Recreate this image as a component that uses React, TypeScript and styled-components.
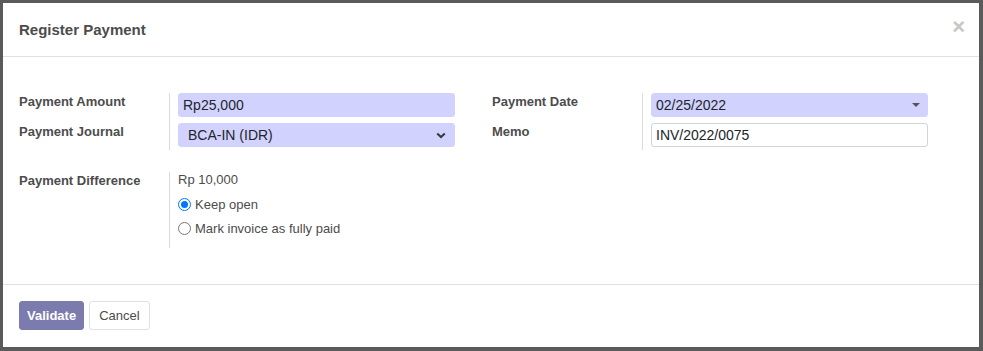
import React, { FC } from 'react'
import styled, { createGlobalStyle } from 'styled-components'

const Global = createGlobalStyle`
  html, body {
    margin: 0;
    padding: 0;
    background: #5a5a5a;
    font-family: "Liberation Sans", Arial, sans-serif;
    font-size: 13px;
    color: #4c4c4c;
  }
  * { box-sizing: border-box; }
`

const Backdrop = styled.div`
  width: 983px;
  height: 351px;
  padding: 3px 4px 4px 3px;
  background: #5a5a5a;
`

const Modal = styled.div`
  background: #fff;
  height: 100%;
  display: flex;
  flex-direction: column;
`

const Header = styled.div`
  height: 54px;
  border-bottom: 1px solid #dee2e6;
  display: flex;
  align-items: center;
  justify-content: space-between;
  padding: 0 14px 0 16px;

  & > h4 {
    margin: 0;
    font-size: 15px;
    font-weight: 700;
    color: #4c4c4c;
  }
`

const Close = styled.span`
  color: #c6c6c6;
  font-size: 22px;
  font-weight: 700;
  line-height: 1;
  margin-top: -5px;
`

const Body = styled.div`
  flex: 1;
  padding: 36px 16px 0 16px;
  display: flex;
  flex-direction: column;
  gap: 22px;
`

const Groups = styled.div`
  display: flex;
  gap: 37px;
`

const Group = styled.div`
  width: 436px;
  display: grid;
  grid-template-columns: 150px 1fr;
`

const Labels = styled.div`
  display: flex;
  flex-direction: column;
  gap: 6px;
`

const Label = styled.div<{ $h?: number }>`
  height: ${p => p.$h ?? 24}px;
  font-weight: 700;
  color: #4c4c4c;
  padding-top: 1px;
`

const Fields = styled.div<{ $pad?: number }>`
  border-left: 1px solid #dcdcdc;
  padding: 0 0 ${p => p.$pad ?? 3}px 8px;
  display: flex;
  flex-direction: column;
  gap: 6px;
`

const Input = styled.div<{ $required?: boolean }>`
  height: 24px;
  border-radius: 3px;
  border: 1px solid ${p => (p.$required ? '#d2d2ff' : '#ced4da')};
  background: ${p => (p.$required ? '#d2d2ff' : '#fff')};
  display: flex;
  align-items: center;
  justify-content: space-between;
  padding: 0 8px 0 4px;
  font-size: 14px;
  color: #212529;
`

const SelectText = styled.span`
  padding-left: 5px;
`

const Caret = styled.span`
  width: 0;
  height: 0;
  border-left: 4px solid transparent;
  border-right: 4px solid transparent;
  border-top: 4px solid #555;
  margin-right: -1px;
`

const Plain = styled.div`
  height: 17px;
  font-size: 13px;
  color: #4c4c4c;
`

const Radio = styled.label`
  height: 18px;
  display: flex;
  align-items: center;
  gap: 4px;
  font-size: 13px;
  color: #4c4c4c;
`

const Dot = styled.span<{ $on?: boolean }>`
  width: 13px;
  height: 13px;
  border-radius: 50%;
  border: 1px solid ${p => (p.$on ? '#0075ff' : '#767676')};
  background: #fff;
  display: flex;
  align-items: center;
  justify-content: center;

  &::after {
    content: '';
    width: 7px;
    height: 7px;
    border-radius: 50%;
    background: ${p => (p.$on ? '#0075ff' : 'transparent')};
  }
`

const Footer = styled.div`
  height: 63px;
  border-top: 1px solid #dee2e6;
  display: flex;
  align-items: flex-start;
  gap: 5px;
  padding: 16px 16px 0 16px;
`

const Button = styled.button<{ $primary?: boolean }>`
  height: 29px;
  padding: 0 ${p => (p.$primary ? 7 : 9)}px;
  border-radius: 3px;
  font-family: "Liberation Sans", Arial, sans-serif;
  font-size: 13px;
  font-weight: ${p => (p.$primary ? 700 : 400)};
  color: ${p => (p.$primary ? '#fff' : '#4c4c4c')};
  background: ${p => (p.$primary ? '#7c7bad' : '#fff')};
  border: 1px solid ${p => (p.$primary ? '#7c7bad' : '#dee2e6')};
`

const Chevron: FC = () => (
  <svg width="10" height="7" viewBox="0 0 10 7">
    <path d="M1.2 1.4 L5 5 L8.8 1.4" fill="none" stroke="#343a40" strokeWidth="2" />
  </svg>
)

const App: FC = () => {
  return (
    <Backdrop>
      <Global />
      <Modal>
        <Header>
          <h4>Register Payment</h4>
          <Close>×</Close>
        </Header>
        <Body>
          <Groups>
            <Group>
              <Labels>
                <Label>Payment Amount</Label>
                <Label>Payment Journal</Label>
              </Labels>
              <Fields>
                <Input $required>Rp25,000</Input>
                <Input $required>
                  <SelectText>BCA-IN (IDR)</SelectText>
                  <Chevron />
                </Input>
              </Fields>
            </Group>
            <Group>
              <Labels>
                <Label>Payment Date</Label>
                <Label>Memo</Label>
              </Labels>
              <Fields>
                <Input $required>
                  <span>02/25/2022</span>
                  <Caret />
                </Input>
                <Input>INV/2022/0075</Input>
              </Fields>
            </Group>
          </Groups>
          <Groups>
            <Group>
              <Labels>
                <Label $h={18}>Payment Difference</Label>
              </Labels>
              <Fields $pad={11}>
                <Plain>Rp 10,000</Plain>
                <Radio>
                  <Dot $on />
                  Keep open
                </Radio>
                <Radio>
                  <Dot />
                  Mark invoice as fully paid
                </Radio>
              </Fields>
            </Group>
          </Groups>
        </Body>
        <Footer>
          <Button $primary>Validate</Button>
          <Button>Cancel</Button>
        </Footer>
      </Modal>
    </Backdrop>
  )
}

export default App
